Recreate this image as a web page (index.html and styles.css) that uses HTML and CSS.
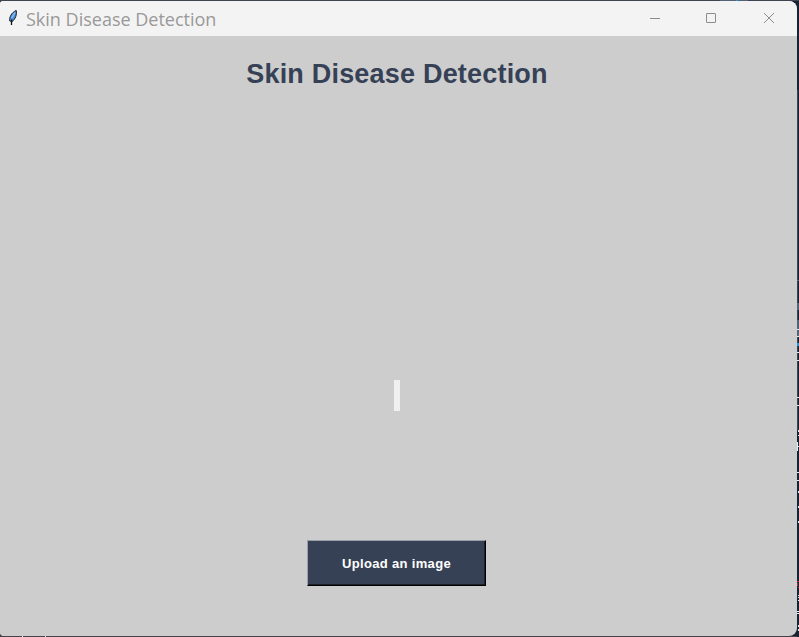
FILE: index.html
```html
<!DOCTYPE html>
<html lang="en">
<head>
<meta charset="utf-8">
<title>Skin Disease Detection</title>
<link rel="stylesheet" href="styles.css">
</head>
<body>
<svg class="desktop" width="799" height="637" shape-rendering="crispEdges" aria-hidden="true">
  <path fill="#3e4350" d="M0 0h799v1H0zM797 90h1v340h-1z"/>
  <path fill="#526277" d="M720 0h28v1h-28zM797 280h2v1h-2zM797 303h2v7h-2zM797 320h2v16h-2z"/>
  <path fill="#318ed0" d="M736 0h2v1h-2zM797 343h2v3h-2z"/>
  <path fill="#e8edf2" d="M797 329h2v1h-2zM797 336h2v1h-2zM797 352h2v1h-2zM797 360h2v1h-2zM797 397h2v1h-2zM797 405h2v1h-2zM798 430h1v2h-1zM798 435h1v1h-1zM797 442h1v9h-1zM798 446h1v1h-1zM797 472h2v1h-2zM797 480h2v1h-2zM798 491h1v2h-1zM798 506h1v2h-1zM798 521h1v2h-1zM798 595h1v1h-1zM798 597h1v1h-1zM798 600h1v1h-1zM797 611h2v1h-2zM797 613h2v1h-2zM798 625h1v2h-1zM798 629h1v2h-1z"/>
  <path fill="#bd3034" d="M797 581h2v1h-2zM797 583h1v3h-1zM798 587h1v1h-1z"/>
  <path fill="#444148" d="M0 636h797v1H0z"/>
  <path fill="#e2e2e2" d="M22 636h1v1h-1zM45 636h1v1h-1z"/>
</svg>
<div class="window">
  <header class="titlebar">
    <svg class="feather" width="12" height="18" viewBox="0 0 12 18" aria-hidden="true">
      <path d="M2.800 12C2 8.500 4.500 3.500 9.200 1.500C10 5.500 8.500 10 5.200 12.500z" fill="#4f94df" stroke="#151a22"/>
      <path d="M8 3.500L4.500 9" stroke="#8ac0f2" stroke-width="1.300"/>
      <path d="M5 10.500L4.500 12.500V16" fill="none" stroke="#101318" stroke-width="1.300"/>
    </svg>
    <span class="caption">Skin Disease Detection</span>
    <svg class="controls" width="126" height="12" viewBox="0 0 126 12" fill="none" stroke="#8c8c8c" aria-hidden="true">
      <path d="M0 6.500h10"/>
      <rect x="56.500" y="1.500" width="9" height="9" rx="0.500"/>
      <path d="M114 1l10 10M124 1l-10 10"/>
    </svg>
  </header>
  <main class="content">
    <h1>Skin Disease Detection</h1>
    <div class="preview"></div>
    <button class="upload" type="button">Upload an image</button>
  </main>
</div>
</body>
</html>
```
FILE: styles.css
```css
* { box-sizing: border-box; }
body {
  margin: 0;
  width: 799px;
  height: 637px;
  padding-top: 1px;
  overflow: hidden;
  background: #172330;
}
.desktop { position: absolute; left: 0; top: 0; }
.window {
  position: relative;
  width: 797px;
  height: 635px;
  overflow: hidden;
  border-radius: 3px 8px 8px 3px;
  background: #cdcdcd;
}
.titlebar {
  display: flex;
  height: 35px;
  background: #f3f3f3;
}
.feather { margin: 8px 0 0 7px; }
.caption {
  margin-left: 7px;
  font: 18px/37px "Open Sans", "Noto Sans", sans-serif;
  color: #999;
  white-space: nowrap;
}
.controls { margin: 11px 21px 0 auto; }
.content {
  display: flex;
  flex-direction: column;
  align-items: center;
  height: 600px;
  padding-right: 4px;
}
h1 {
  margin: 23px 0 0;
  padding-left: 1px;
  font: bold 27px/30px "Liberation Sans", sans-serif;
  letter-spacing: 0.2px;
  color: #364156;
  white-space: nowrap;
}
.preview {
  width: 6px;
  height: 31px;
  margin-top: 291px;
  background: #f0f0f0;
}
.upload {
  width: 179px;
  height: 46px;
  margin-top: 129px;
  padding: 1px 0 0;
  border: 1px solid;
  border-color: #9aa0aa #000 #000 #9aa0aa;
  background: #364156;
  box-shadow: inset -1px -1px #1b202b;
  color: #fff;
  font: bold 13px/16px "Liberation Sans", sans-serif;
  letter-spacing: 0.33px;
}
```
